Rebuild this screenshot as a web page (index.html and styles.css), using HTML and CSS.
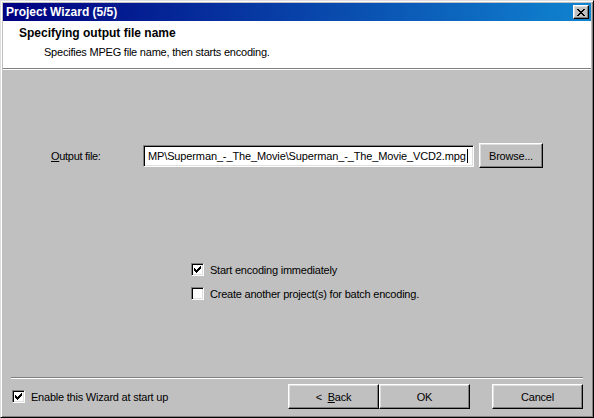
FILE: index.html
```html
<!DOCTYPE html>
<html>
<head>
<meta charset="utf-8">
<title>Project Wizard (5/5)</title>
<link rel="stylesheet" href="styles.css">
</head>
<body>
<div class="window">
  <div class="titlebar">
    <span class="title">Project Wizard (5/5)</span>
    <div class="close-btn">
      <svg width="8" height="7" viewBox="0 0 8 7" shape-rendering="crispEdges"><path d="M0 0h2v1h-2z M6 0h2v1h-2z M1 1h2v1h-2z M5 1h2v1h-2z M2 2h4v1h-4z M3 3h2v1h-2z M2 4h4v1h-4z M1 5h2v1h-2z M5 5h2v1h-2z M0 6h2v1h-2z M6 6h2v1h-2z" fill="#000"/></svg>
    </div>
  </div>
  <div class="header">
    <div class="header-title">Specifying output file name</div>
    <div class="header-sub">Specifies MPEG file name, then starts encoding.</div>
  </div>
  <div class="body">
    <div class="file-row">
      <span class="file-label"><u>O</u>utput file:</span>
      <div class="textbox"><span class="textbox-text">MP\Superman_-_The_Movie\Superman_-_The_Movie_VCD2.mpg</span><span class="caret"></span></div>
      <div class="button browse"><span>Browse...</span></div>
    </div>
    <div class="options">
      <div class="check-row">
        <span class="checkbox"><svg width="7" height="7" viewBox="0 0 7 7" shape-rendering="crispEdges"><path d="M0 2H1V3H2V4H3V3H4V2H5V1H6V0H7V3H6V4H5V5H4V6H3V7H2V6H1V5H0Z" fill="#000"/></svg></span>
        <span>Start encoding immediately</span>
      </div>
      <div class="check-row">
        <span class="checkbox"></span>
        <span>Create another project(s) for batch encoding.</span>
      </div>
    </div>
    <div class="footer">
      <div class="separator"></div>
      <div class="footer-row">
        <div class="check-row footer-check">
          <span class="checkbox"><svg width="7" height="7" viewBox="0 0 7 7" shape-rendering="crispEdges"><path d="M0 2H1V3H2V4H3V3H4V2H5V1H6V0H7V3H6V4H5V5H4V6H3V7H2V6H1V5H0Z" fill="#000"/></svg></span>
          <span>Enable this Wizard at start up</span>
        </div>
        <div class="buttons">
          <div class="button nav"><span class="back-label">&lt;&nbsp; <u>B</u>ack</span></div>
          <div class="button nav"><span>OK</span></div>
          <div class="button nav cancel"><span>Cancel</span></div>
        </div>
      </div>
    </div>
  </div>
</div>
</body>
</html>
```
FILE: styles.css
```css
* { box-sizing: border-box; }
html, body { margin: 0; padding: 0; background: #c0c0c0; }
body {
  font-family: "Liberation Sans", Arial, sans-serif;
  font-size: 11px;
  letter-spacing: -0.22px;
  color: #000;
}
.window {
  width: 594px;
  height: 418px;
  display: flex;
  flex-direction: column;
  background: #c0c0c0;
  border: 1px solid;
  border-color: #dfdfdf #000 #000 #dfdfdf;
  box-shadow: inset 1px 1px #fff, inset -1px -1px #808080;
  padding: 2px;
}
.titlebar {
  height: 18px;
  flex: none;
  display: flex;
  align-items: center;
  justify-content: space-between;
  background: linear-gradient(to right, #000080, #1084d0);
  padding: 0 2px 0 3px;
}
.title {
  color: #fff;
  font-weight: bold;
  font-size: 12px;
  letter-spacing: 0;
}
.close-btn {
  width: 16px;
  height: 14px;
  background: #c0c0c0;
  border: 1px solid;
  border-color: #fff #000 #000 #fff;
  box-shadow: inset -1px -1px #808080, inset 1px 1px #dfdfdf;
  display: flex;
  align-items: center;
  justify-content: center;
}
.close-btn svg { display: block; margin-left: -1px; }
.header {
  flex: none;
  height: 48px;
  background: #fff;
  border-bottom: 1px solid #808080;
  box-shadow: 0 1px #fff;
  padding: 6px 0 0 16px;
}
.header-title {
  font-weight: bold;
  font-size: 12px;
  letter-spacing: 0;
  line-height: 13px;
}
.header-sub {
  margin-top: 6px;
  padding-left: 25px;
  line-height: 13px;
}
.body {
  flex: 1;
  display: flex;
  flex-direction: column;
  padding-top: 74px;
}
.file-row {
  display: flex;
  align-items: center;
  height: 25px;
  padding-left: 48px;
}
.file-label {
  width: 92px;
  flex: none;
  letter-spacing: -0.3px;
}
.textbox {
  width: 331px;
  height: 22px;
  background: #fff;
  border: 1px solid;
  border-color: #808080 #fff #fff #808080;
  box-shadow: inset 1px 1px #000, inset -1px -1px #dfdfdf;
  padding: 0 0 0 4px;
  display: flex;
  align-items: center;
  overflow: hidden;
  white-space: nowrap;
  letter-spacing: -0.13px;
}
.caret {
  display: inline-block;
  width: 1px;
  height: 14px;
  background: #000;
  margin-left: 1px;
}
.button {
  background: #c0c0c0;
  border: 1px solid;
  border-color: #fff #000 #000 #fff;
  box-shadow: inset -1px -1px #808080, inset 1px 1px #dfdfdf;
  display: flex;
  align-items: center;
  justify-content: center;
  height: 25px;
}
.browse {
  width: 64px;
  margin-left: 5px;
}
.options {
  margin-top: 95px;
  margin-left: 188px;
  display: flex;
  flex-direction: column;
  gap: 11px;
}
.check-row {
  display: flex;
  align-items: center;
  height: 13px;
  gap: 6px;
}
.checkbox {
  width: 13px;
  height: 13px;
  flex: none;
  background: #fff;
  border: 1px solid;
  border-color: #808080 #fff #fff #808080;
  box-shadow: inset 1px 1px #000, inset -1px -1px #dfdfdf;
  display: flex;
  align-items: center;
  justify-content: center;
}
.checkbox svg { display: block; }
.footer {
  margin-top: auto;
  padding: 0 8px 6px 8px;
}
.separator {
  height: 2px;
  border-top: 1px solid #808080;
  border-bottom: 1px solid #fff;
}
.footer-row {
  margin-top: 5px;
  display: flex;
  align-items: center;
  justify-content: space-between;
}
.footer-check { margin-left: 1px; }
.buttons {
  display: flex;
}
.nav { width: 91px; }
.back-label { white-space: pre; }
.cancel { margin-left: 22px; }
```
